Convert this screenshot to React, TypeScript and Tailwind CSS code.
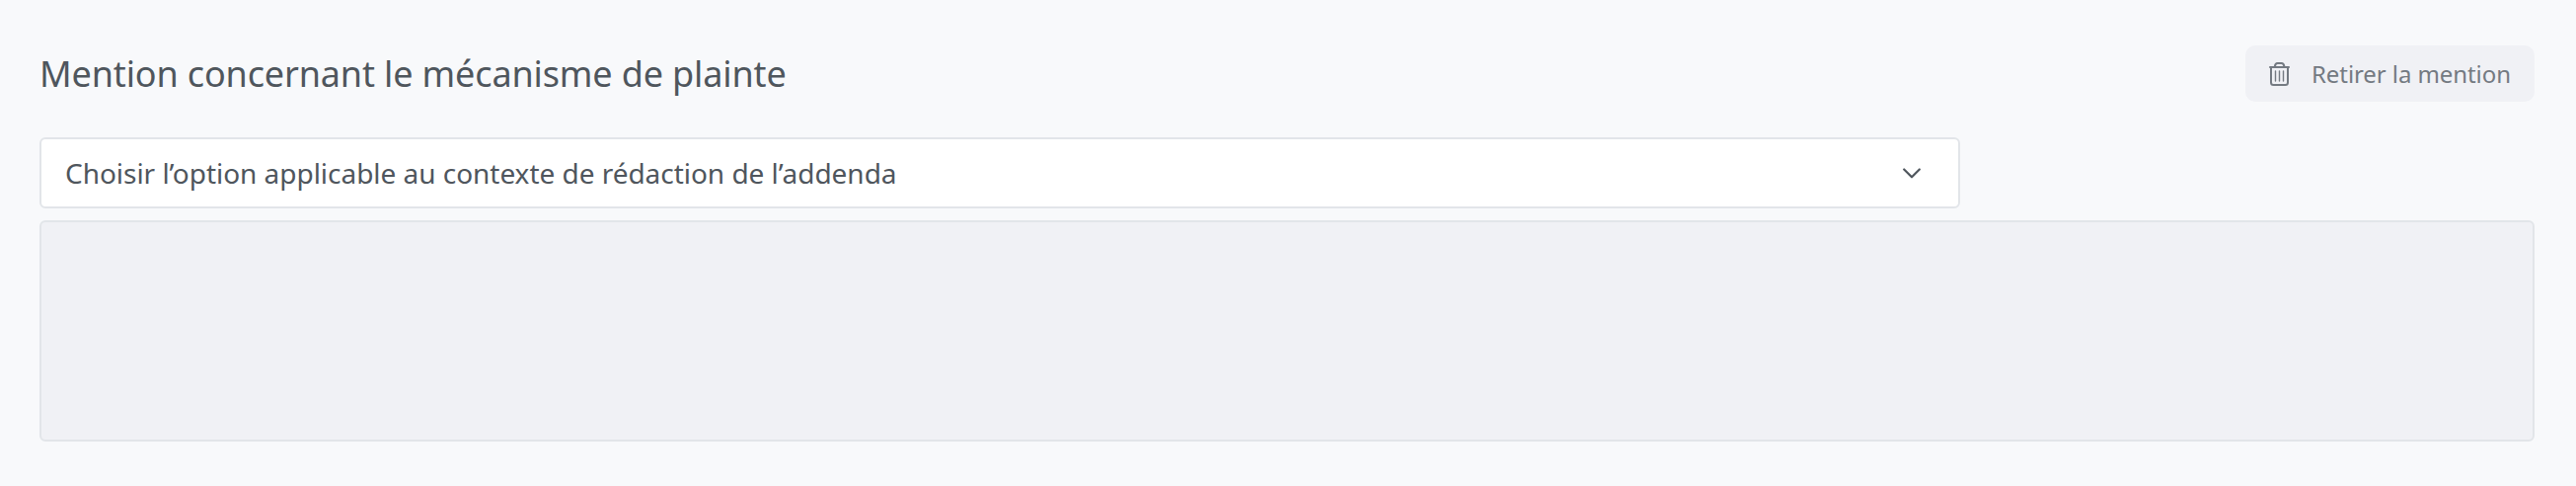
export default function App() {
  return (
    <section className="w-full h-[492px] bg-[#f8f9fb] pl-10 pr-[42px] pt-[46px] font-['Noto_Sans',sans-serif] text-[#4f565d]">
      <div className="flex items-center justify-between h-[57px]">
        <h2 className="text-4xl leading-none tracking-[-0.14px] whitespace-nowrap">
          Mention concernant le mécanisme de plainte
        </h2>
        <button className="flex items-center w-[293px] h-[57px] pl-6 rounded-[10px] bg-[#f0f1f5] text-[#747a82] text-2xl leading-none tracking-[-0.08px] whitespace-nowrap">
          <svg
            className="w-[21px] h-6 mr-[22px] shrink-0"
            viewBox="0 0 21 24"
            fill="none"
            stroke="currentColor"
            strokeWidth="2"
            strokeLinecap="round"
            strokeLinejoin="round"
          >
            <path d="M1 5h19" />
            <path d="M5.8 4.6C6 2.4 7 1 8.6 1h4c1.600 0 2.600 1.400 2.800 3.600" />
            <path d="M2 5v15.500A2.500 2.500 0 0 0 4.500 23h12a2.500 2.500 0 0 0 2.500-2.500V5" />
            <path strokeWidth="1.400" d="M6.500 9v10M10.500 9v10M14.500 9v10" />
          </svg>
          Retirer la mention
        </button>
      </div>

      <button className="mt-9 flex items-center justify-between w-[1946px] h-[72px] pl-6 pr-[38px] rounded-md border-2 border-[#e2e5e9] bg-white text-[28px] leading-none tracking-[-0.03px] text-left whitespace-nowrap">
        Choisir l’option applicable au contexte de rédaction de l’addenda
        <svg
          className="w-[18px] h-[11px]"
          viewBox="0 0 18 11"
          fill="none"
          stroke="currentColor"
          strokeWidth="2.200"
          strokeLinecap="round"
          strokeLinejoin="round"
        >
          <path d="M1.200 1.500 9 9.300l7.800-7.800" />
        </svg>
      </button>

      <div className="mt-3 h-[224px] rounded-md border-2 border-[#e2e5e9] bg-[#f0f1f5]" />
    </section>
  );
}
